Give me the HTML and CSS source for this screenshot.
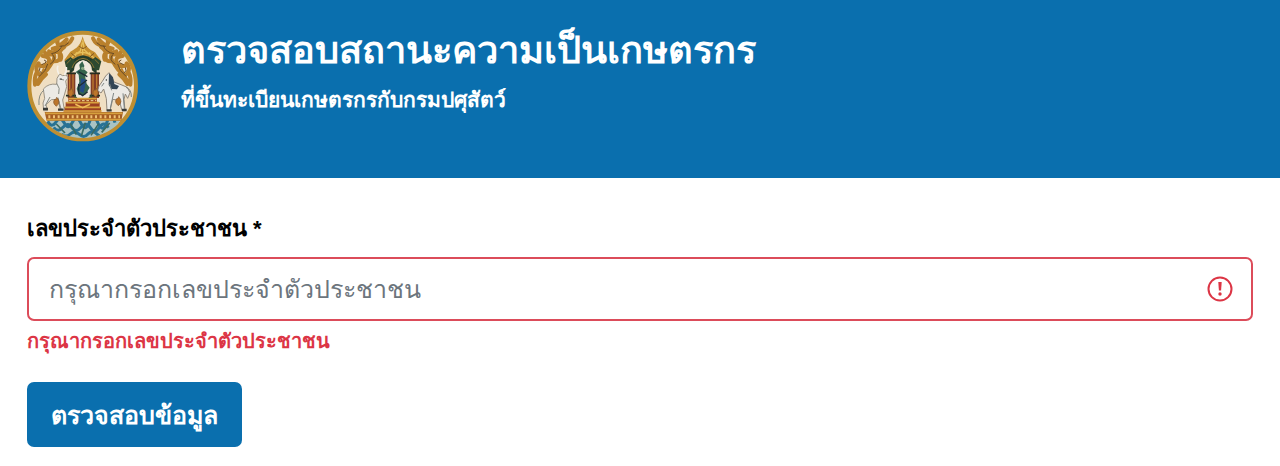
FILE: index.html
```html
<!DOCTYPE html>
<html lang="th">
<head>
    <meta charset="UTF-8">
    <meta name="viewport" content="width=device-width, initial-scale=1.0">
    <title>ตรวจสอบสถานะความเป็นเกษตรกร</title>
    <link rel="stylesheet" href="styles.css">
</head>
<body>
    <header class="page-header">
        <svg class="logo" viewBox="20 18 336 336" aria-hidden="true">
            <defs>
                <clipPath id="seal"><circle cx="187" cy="186" r="156"/></clipPath>
                <g id="scrolls" fill="none" stroke="#b9802c" stroke-width="12" stroke-linecap="round">
                    <path d="M156 43q-10 22-30 20t-14-12M139 46q-22 24-42 28M112 58q8 20-13 30t-25-2M86 82q23 8 13 27t-23 14"/>
                    <path d="M67 96q24 2 18 19t-28 9M55 118q-12 15-3 28t18 3M49 145q-8 17-5 37M71 139q-5 15-22 37M132 69q-17 10-14 27t-19 16M107 83q21 3 14 24M91 122q-10 17-23 27M77 151q-12 9-24 29"/>
                </g>
                <path id="flame" d="M0 0q-14-11-4-22 3 6 5-5 14 15-1 27z"/>
            </defs>
            <circle cx="187" cy="186" r="160" fill="#f0dfc3" stroke="#bd8e32" stroke-width="12"/>
            <g clip-path="url(#seal)">
                <use href="#scrolls"/>
                <use href="#scrolls" transform="translate(374 0) scale(-1 1)"/>
                <g fill="none" stroke="#694b27" stroke-width="3">
                    <path d="M145 56q-11 13-27 11M125 65q-9 21-32 24M96 91q15 16-7 30M71 108q16 5-7 14M59 130q-6 11 5 18M82 120q-4 21-26 38"/>
                    <path d="M229 56q11 13 27 11M249 65q9 21 32 24M278 91q-15 16 7 30M303 108q-16 5 7 14M315 130q6 11-5 18M292 120q4 21 26 38"/>
                </g>
                <path d="M80 286h220l-28 63H110z" fill="#a9c3c4"/>
                <g fill="none" stroke="#287294" stroke-width="9">
                    <path d="M82 292q12 22 25 2t25 3 24-2 26 3 25-3 26 2 27-3 24 2"/>
                    <path d="M100 310q13 17 28 0t27 1 27-1 28 1 27-1 27 1M124 330q13 12 26 0t27 1 26-1 28 1 25-2"/>
                </g>
                <path d="M108 300l26 27M150 298l18 34M195 296l-12 40M235 299l-23 35M268 297l-24 28" stroke="#3a6b62" stroke-width="5"/>
                <path d="M73 264h235l-5 26H79z" fill="#a45c22"/>
                <path d="M75 268h231M79 287h224" stroke="#d6a03d" stroke-width="5"/>
                <path d="M84 278h215" stroke="#efc276" stroke-width="9" stroke-dasharray="6 8"/>
            </g>
            <!-- throne canopy -->
            <path d="M187 37c8 31 18 39 37 48l17 23-8 20c-27-44-66-44-93 0l-8-20 18-25c22-11 30-20 37-46z" fill="#c38d2f"/>
            <path d="M187 47l5 31 20 17M186 55l-6 26-21 14M148 107q38-44 78 0M187 75v20M169 85l-5 12M207 85l5 12" fill="none" stroke="#e6bf5c" stroke-width="4"/>
            <path d="M177 66q11 15 22 0M153 88l12 10M221 88l-12 10" fill="none" stroke="#805622" stroke-width="3"/>
            <path d="M148 151V130q5-33 40-36 35 3 41 36v21l-14-12q-1-25-27-30-26 5-27 30z" fill="#253c2a"/>
            <path d="M139 139l-6-27 18-13 13 12-12 27zM236 139l7-27-18-13-14 12 13 27z" fill="#2d4930"/>
            <path d="M139 119l13-13M236 119l-13-13M155 132q8-26 33-29 24 3 33 29" stroke="#8b7735" stroke-width="3" fill="none"/>
            <!-- throne and figure -->
            <path d="M162 140q4-29 26-31 22 3 25 31v85h-51z" fill="#efe9df"/>
            <path d="M142 146h23v76h-23zM211 146h25v76h-25z" fill="#813c26"/>
            <path d="M148 150v67M158 150v67M218 150v67M229 150v67" stroke="#bf7b31" stroke-width="4"/>
            <path d="M138 148h29M208 148h31M137 215h30M208 215h31" stroke="#252e20" stroke-width="5"/>
            <path d="M162 207q6 20 25 21 20-1 27-22v26h-52z" fill="#32543d"/>
            <path d="M186 112l6 13-2 10 12 10-8 10 5 24 9 12-14 22h-19l-6-19 8-20-2-22-9-8 13-9-2-13z" fill="#35644e"/>
            <path d="M182 163l14 4-2 23-5 17-10-5 2-20z" fill="#234c87"/>
            <path d="M174 143l27 15M174 188l26-20M175 180v27l12 8 15-12" fill="none" stroke="#1d2c35" stroke-width="4"/>
            <circle cx="187" cy="133" r="5" fill="#88a784"/>
            <path d="M144 222h86v12h-86zM136 235h102v15H136zM130 250h112v13H130z" fill="#9b4022"/>
            <path d="M145 224h84M138 236h98M133 250h107M130 261h114" stroke="#d9a23d" stroke-width="5"/>
            <path d="M146 230h82" stroke="#efdc9b" stroke-width="3" stroke-dasharray="8 5"/>
            <path d="M165 241l22 10 22-10" fill="none" stroke="#f0bd58" stroke-width="5"/>
            <!-- cow on the left -->
            <path d="M69 195q16-18 40-14l1-18 8-13 9 5 11-2 5 9-7 9 3 17-7 25-5 15 5 29h-9l-9-31-21 1-16 15 4 18H70l-2-23 5-14z" fill="#eceae5" stroke="#9c9486" stroke-width="3"/>
            <path d="M71 198q-18 14-15 45M89 219l-15 27M113 221l7 36M109 178q12 14 6 32M117 165l14 3" fill="none" stroke="#858981" stroke-width="3"/>
            <path d="M116 151q-8-16-3-26M132 153q8-10 6-24" fill="none" stroke="#f4f0e8" stroke-width="5"/>
            <circle cx="122" cy="165" r="2" fill="#24292b"/>
            <path d="M68 255h15M113 257h16" stroke="#393a36" stroke-width="7"/>
            <!-- horse on the right -->
            <path d="M246 172l10-16 10-10 7 9 8 19 21 8 19 8 8 16-7 17-7-13-4 16 3 34h-9l-8-31-20-3-8 34h-9l-2-36-8-29-8 12-10-7 4-14z" fill="#eceae5" stroke="#90877b" stroke-width="3"/>
            <path d="M266 148l12 12 4 20 14 6-6 10-17-1-8-12" fill="#344655"/>
            <path d="M317 190q17 6 16 29M268 180l6 19M280 207l-10 45M308 208l4 46M251 177l-7 10" fill="none" stroke="#7e8584" stroke-width="3"/>
            <circle cx="258" cy="168" r="2" fill="#1f2527"/>
            <path d="M259 259h15M305 258h14" stroke="#393a36" stroke-width="7"/>
            <g fill="#bc762a" stroke="#80532a" stroke-width="2">
                <use href="#flame" x="108" y="247"/>
                <use href="#flame" x="151" y="219"/>
                <use href="#flame" x="226" y="219"/>
                <use href="#flame" x="294" y="245"/>
            </g>
        </svg>
        <div class="heading">
            <h1 class="title">ตรวจสอบสถานะความเป็นเกษตรกร</h1>
            <p class="subtitle">ที่ขึ้นทะเบียนเกษตรกรกับกรมปศุสัตว์</p>
        </div>
    </header>

    <main>
        <form class="check-form" novalidate>
            <label class="form-label" for="citizenId">เลขประจำตัวประชาชน *</label>
            <div class="input-wrapper">
                <input class="form-control" type="text" id="citizenId" inputmode="numeric" placeholder="กรุณากรอกเลขประจำตัวประชาชน" aria-invalid="true" aria-describedby="citizenIdError">
                <svg class="invalid-icon" viewBox="0 0 26 26" aria-hidden="true">
                    <circle cx="13" cy="13" r="11.5" fill="none" stroke="#dc3545" stroke-width="2"/>
                    <path d="M11.3 6h3.4l-.6 8.5h-2.2z" fill="#dc3545"/>
                    <circle cx="13" cy="18" r="1.7" fill="#dc3545"/>
                </svg>
            </div>
            <div class="invalid-feedback" id="citizenIdError">กรุณากรอกเลขประจำตัวประชาชน</div>
            <button class="btn" type="submit">ตรวจสอบข้อมูล</button>
        </form>
    </main>
</body>
</html>
```
FILE: styles.css
```css
* {
    box-sizing: border-box;
}

body {
    margin: 0;
    font-family: "Liberation Sans", sans-serif;
    background-color: #fff;
    color: #000;
}

.page-header {
    display: flex;
    align-items: flex-start;
    gap: 42px;
    padding: 30px 27px 36px;
    background-color: #0a6fae;
    color: #fff;
}

.logo {
    flex: none;
    width: 112px;
    height: 112px;
}

.title {
    margin: 0;
    font-size: 38px;
    line-height: 40px;
    font-weight: bold;
}

.subtitle {
    margin: 14px 0 0;
    font-size: 21px;
    line-height: 32px;
    font-weight: bold;
}

.check-form {
    padding: 35px 27px 18px;
}

.form-label {
    display: block;
    margin-bottom: 12px;
    font-size: 22px;
    line-height: 32px;
    font-weight: bold;
}

.input-wrapper {
    position: relative;
}

.form-control {
    display: block;
    width: 100%;
    height: 64px;
    padding: 0 64px 0 20px;
    border: 2px solid #dc4c5a;
    border-radius: 7px;
    background-color: #fff;
    font-family: inherit;
    font-size: 25px;
}

.form-control::placeholder {
    color: #6c757d;
    opacity: 1;
}

.invalid-icon {
    position: absolute;
    top: 19px;
    right: 20px;
    width: 26px;
    height: 26px;
}

.invalid-feedback {
    margin: 4px 0 25px;
    font-size: 20px;
    line-height: 32px;
    font-weight: bold;
    color: #dc3545;
}

.btn {
    height: 65px;
    padding: 0 24px;
    border: 0;
    border-radius: 7px;
    background-color: #0a6fae;
    color: #fff;
    font-family: inherit;
    font-size: 25px;
    font-weight: bold;
    cursor: pointer;
}
```
